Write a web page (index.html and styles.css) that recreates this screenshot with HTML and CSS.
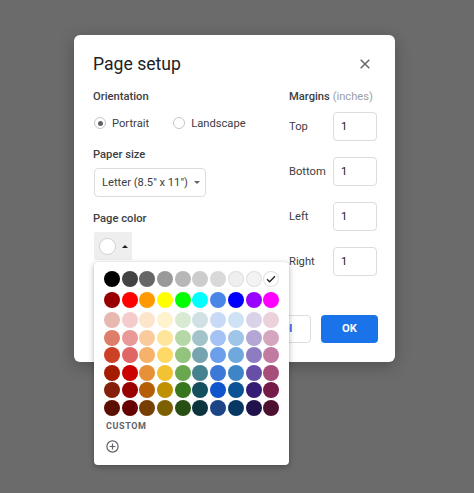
FILE: index.html
```html
<!DOCTYPE html>
<html>
<head>
<meta charset="utf-8">
<title>Page setup</title>
<link rel="stylesheet" href="styles.css">
</head>
<body>
<div class="dialog">
  <div class="header">
    <h1 class="title">Page setup</h1>
    <svg class="close" width="10" height="10" viewBox="0 0 10 10"><path d="M0.7 0.7L9.3 9.3M9.3 0.7L0.7 9.3" stroke="#5f6368" stroke-width="1.4"/></svg>
  </div>
  <div class="content">
    <div class="left">
      <div class="label">Orientation</div>
      <div class="radios">
        <span class="radio on"></span><span class="rtext">Portrait</span>
        <span class="radio"></span><span class="rtext">Landscape</span>
      </div>
      <div class="label gap">Paper size</div>
      <div class="select"><span>Letter (8.5" x 11")</span><span class="caret-down"></span></div>
      <div class="label gap">Page color</div>
      <div class="colorwrap">
        <div class="colorbtn"><span class="swatch"></span><span class="caret-up"></span></div>
        <div class="palette">
          <div class="prow">
            <span class="dot" style="background:#000000"></span>
            <span class="dot" style="background:#434343"></span>
            <span class="dot" style="background:#666666"></span>
            <span class="dot" style="background:#999999"></span>
            <span class="dot" style="background:#b7b7b7"></span>
            <span class="dot" style="background:#cccccc"></span>
            <span class="dot" style="background:#d9d9d9"></span>
            <span class="dot light" style="background:#efefef"></span>
            <span class="dot light" style="background:#f3f3f3"></span>
            <span class="dot light sel" style="background:#ffffff"><svg width="10" height="8" viewBox="0 0 10 8"><path d="M1 4.2L3.6 6.8L9 1.2" fill="none" stroke="#202124" stroke-width="1.3"/></svg></span>
          </div>
          <div class="prow second">
            <span class="dot" style="background:#980000"></span>
            <span class="dot" style="background:#ff0000"></span>
            <span class="dot" style="background:#ff9900"></span>
            <span class="dot" style="background:#ffff00"></span>
            <span class="dot" style="background:#00ff00"></span>
            <span class="dot" style="background:#00ffff"></span>
            <span class="dot" style="background:#4a86e8"></span>
            <span class="dot" style="background:#0000ff"></span>
            <span class="dot" style="background:#9900ff"></span>
            <span class="dot" style="background:#ff00ff"></span>
          </div>
          <div class="pgrid">
            <span class="dot" style="background:#e6b8af"></span>
            <span class="dot" style="background:#f4cccc"></span>
            <span class="dot" style="background:#fce5cd"></span>
            <span class="dot" style="background:#fff2cc"></span>
            <span class="dot" style="background:#d9ead3"></span>
            <span class="dot" style="background:#d0e0e3"></span>
            <span class="dot" style="background:#c9daf8"></span>
            <span class="dot" style="background:#cfe2f3"></span>
            <span class="dot" style="background:#d9d2e9"></span>
            <span class="dot" style="background:#ead1dc"></span>
            <span class="dot" style="background:#dd7e6b"></span>
            <span class="dot" style="background:#ea9999"></span>
            <span class="dot" style="background:#f9cb9c"></span>
            <span class="dot" style="background:#ffe599"></span>
            <span class="dot" style="background:#b6d7a8"></span>
            <span class="dot" style="background:#a2c4c9"></span>
            <span class="dot" style="background:#a4c2f4"></span>
            <span class="dot" style="background:#9fc5e8"></span>
            <span class="dot" style="background:#b4a7d6"></span>
            <span class="dot" style="background:#d5a6bd"></span>
            <span class="dot" style="background:#cc4125"></span>
            <span class="dot" style="background:#e06666"></span>
            <span class="dot" style="background:#f6b26b"></span>
            <span class="dot" style="background:#ffd966"></span>
            <span class="dot" style="background:#93c47d"></span>
            <span class="dot" style="background:#76a5af"></span>
            <span class="dot" style="background:#6d9eeb"></span>
            <span class="dot" style="background:#6fa8dc"></span>
            <span class="dot" style="background:#8e7cc3"></span>
            <span class="dot" style="background:#c27ba0"></span>
            <span class="dot" style="background:#a61c00"></span>
            <span class="dot" style="background:#cc0000"></span>
            <span class="dot" style="background:#e69138"></span>
            <span class="dot" style="background:#f1c232"></span>
            <span class="dot" style="background:#6aa84f"></span>
            <span class="dot" style="background:#45818e"></span>
            <span class="dot" style="background:#3c78d8"></span>
            <span class="dot" style="background:#3d85c6"></span>
            <span class="dot" style="background:#674ea7"></span>
            <span class="dot" style="background:#a64d79"></span>
            <span class="dot" style="background:#85200c"></span>
            <span class="dot" style="background:#990000"></span>
            <span class="dot" style="background:#b45f06"></span>
            <span class="dot" style="background:#bf9000"></span>
            <span class="dot" style="background:#38761d"></span>
            <span class="dot" style="background:#134f5c"></span>
            <span class="dot" style="background:#1155cc"></span>
            <span class="dot" style="background:#0b5394"></span>
            <span class="dot" style="background:#351c75"></span>
            <span class="dot" style="background:#741b47"></span>
            <span class="dot" style="background:#5b0f00"></span>
            <span class="dot" style="background:#660000"></span>
            <span class="dot" style="background:#783f04"></span>
            <span class="dot" style="background:#7f6000"></span>
            <span class="dot" style="background:#274e13"></span>
            <span class="dot" style="background:#0c343d"></span>
            <span class="dot" style="background:#1c4587"></span>
            <span class="dot" style="background:#073763"></span>
            <span class="dot" style="background:#20124d"></span>
            <span class="dot" style="background:#4c1130"></span>
          </div>
          <div class="custom">CUSTOM</div>
          <svg class="plus" width="13" height="13" viewBox="0 0 13 13"><circle cx="6.5" cy="6.5" r="5.6" fill="none" stroke="#5f6368" stroke-width="1.2"/><path d="M6.5 3.6V9.4M3.6 6.5H9.4" stroke="#5f6368" stroke-width="1.2"/></svg>
        </div>
      </div>
    </div>
    <div class="right">
      <div class="label">Margins <span class="unit">(inches)</span></div>
      <div class="mrow"><span class="mlabel">Top</span><span class="minput">1</span></div>
      <div class="mrow"><span class="mlabel">Bottom</span><span class="minput">1</span></div>
      <div class="mrow"><span class="mlabel">Left</span><span class="minput">1</span></div>
      <div class="mrow"><span class="mlabel">Right</span><span class="minput">1</span></div>
    </div>
  </div>
  <div class="footer">
    <button class="btn cancel">Cancel</button>
    <button class="btn ok">OK</button>
  </div>
</div>
</body>
</html>
```

FILE: styles.css
```css
* { box-sizing: border-box; }
html, body { margin: 0; }
body {
  background: #6b6b6b;
  width: 474px;
  height: 493px;
  padding: 35px 0 0 74px;
  font-family: Roboto, "Liberation Sans", sans-serif;
  color: #3c4043;
  font-size: 11.2px;
  overflow: hidden;
}
.dialog {
  width: 321px;
  height: 327px;
  background: #fff;
  border-radius: 6px;
  box-shadow: 0 4px 16px rgba(0,0,0,0.25);
  padding: 17px 17px 19px 19px;
  display: flex;
  flex-direction: column;
}
.header {
  display: flex;
  align-items: center;
  justify-content: space-between;
  height: 24px;
  padding-right: 8px;
}
.title {
  margin: 0;
  font-size: 17.6px;
  font-weight: 400;
  line-height: 24px;
  color: #202124;
}
.content {
  display: flex;
  margin-top: 13px;
}
.left { width: 196px; }
.right { width: 89px; }
.label {
  font-weight: 500;
  line-height: 16px;
  color: #3c4043;
}
.label.gap { margin-top: 14px; }
.unit { color: #9aa0a6; font-weight: 400; }
.radios {
  display: flex;
  align-items: center;
  height: 20px;
  margin-top: 8px;
}
.radio {
  width: 12px;
  height: 12px;
  border: 1px solid #c4c7c5;
  border-radius: 50%;
  margin-left: 1px;
  display: flex;
  align-items: center;
  justify-content: center;
}
.radio.on::after {
  content: "";
  width: 5px;
  height: 5px;
  border-radius: 50%;
  background: #5f6368;
}
.rtext { margin-left: 6px; margin-right: 23px; }
.select {
  margin-top: 5px;
  margin-left: 1px;
  width: 112px;
  height: 29px;
  border: 1px solid #dadce0;
  border-radius: 4px;
  display: flex;
  align-items: center;
  padding-left: 7px;
  color: #3c4043;
}
.caret-down {
  margin-left: 6px;
  width: 0; height: 0;
  border-left: 3px solid transparent;
  border-right: 3px solid transparent;
  border-top: 3px solid #5f6368;
}
.colorwrap { position: relative; margin-top: 5px; margin-left: 1px; }
.colorbtn {
  width: 38px;
  height: 28px;
  background: #eeeeee;
  border-radius: 2px;
  display: flex;
  align-items: center;
  padding-left: 5px;
}
.swatch {
  width: 17px;
  height: 17px;
  border-radius: 50%;
  background: #fff;
  border: 1px solid #d0d0d0;
}
.caret-up {
  margin-left: 6px;
  width: 0; height: 0;
  border-left: 3px solid transparent;
  border-right: 3px solid transparent;
  border-bottom: 3px solid #202124;
}
.palette {
  position: absolute;
  left: 0;
  top: 30px;
  width: 195px;
  height: 203px;
  background: #fff;
  border-radius: 4px;
  box-shadow: 0 2px 6px rgba(0,0,0,0.28), 0 0 1px rgba(0,0,0,0.2);
  padding: 9px 10px;
  z-index: 2;
}
.prow, .pgrid {
  display: grid;
  grid-template-columns: repeat(10, 16px);
  column-gap: 1.7px;
  row-gap: 1.55px;
}
.prow.second { margin-top: 5px; }
.pgrid { margin-top: 4px; }
.dot {
  width: 16px;
  height: 16px;
  border-radius: 50%;
  display: flex;
  align-items: center;
  justify-content: center;
}
.dot.light { box-shadow: inset 0 0 0 1px #e0e0e0; }
.custom {
  margin-top: 4px;
  line-height: 12px;
  font-size: 9px;
  font-weight: 700;
  letter-spacing: 0.6px;
  color: #5f6368;
  padding-left: 2px;
}
.plus { display: block; margin-top: 8px; margin-left: 1.5px; }
.mrow {
  display: flex;
  align-items: center;
  margin-top: 7px;
  height: 29px;
}
.mrow + .mrow { margin-top: 16px; }
.mlabel { width: 44px; }
.minput {
  width: 44px;
  height: 29px;
  border: 1px solid #dadce0;
  border-radius: 4px;
  display: flex;
  align-items: center;
  padding-left: 7px;
  color: #202124;
}
.footer {
  margin-top: auto;
  display: flex;
  justify-content: flex-end;
  gap: 10px;
}
.btn {
  height: 28.5px;
  border-radius: 4px;
  font-family: Roboto, "Liberation Sans", sans-serif;
  font-size: 11.2px;
  font-weight: 700;
  cursor: pointer;
}
.cancel {
  width: 72px;
  background: #fff;
  border: 1px solid #dadce0;
  color: #1a73e8;
}
.ok {
  width: 57px;
  background: #1a73e8;
  border: none;
  color: #fff;
}
```
